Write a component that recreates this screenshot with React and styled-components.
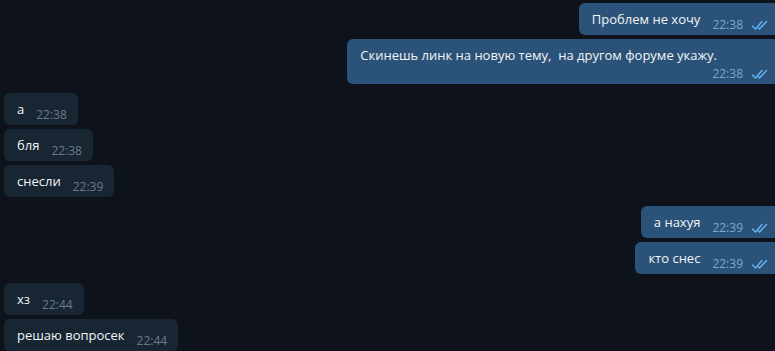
import React from "react";
import styled, { createGlobalStyle } from "styled-components";

const Global = createGlobalStyle`
  html, body { margin: 0; padding: 0; background: #0e131b; overflow: hidden; }
  body { font-family: "Open Sans", "Noto Sans", sans-serif; }
`;

const Chat = styled.div`
  display: flex;
  flex-direction: column;
  padding: 3px 0 0 4px;
  width: 775px;
  height: 351px;
  box-sizing: border-box;
  overflow: hidden;
`;

const Group = styled.div`
  display: flex;
  flex-direction: column;
  align-items: ${(p) => (p.$out ? "flex-end" : "flex-start")};
  gap: 4px;
  margin-top: ${(p) => p.$gap || 0}px;
  margin-right: ${(p) => (p.$out ? "-4px" : "0")};
`;

const Bubble = styled.div`
  display: flex;
  flex-direction: ${(p) => (p.$wrap ? "column" : "row")};
  align-items: flex-end;
  box-sizing: border-box;
  padding: 7px ${(p) => (p.$out ? "10px" : "11px")} 6px 13px;
  border-radius: 6px;
  background: ${(p) => (p.$out ? "#2b5278" : "#182533")};
  color: #f2f4f6;
`;

const Text = styled.div`
  font-size: 13px;
  line-height: 19px;
  white-space: pre;
  align-self: flex-start;
  padding-right: ${(p) => (p.$wrap ? "52px" : "0")};
`;

const Meta = styled.div`
  display: flex;
  align-items: center;
  gap: 8px;
  margin-left: ${(p) => (p.$wrap ? "0" : "12px")};
  margin-top: ${(p) => (p.$wrap ? "2px" : "0")};
  margin-bottom: -3px;
  font-size: 12px;
  line-height: 14px;
  color: ${(p) => (p.$out ? "#7ea7cf" : "#6b7a89")};
`;

const Checks = () => (
  <svg width="18" height="11" viewBox="0 0 18 11" fill="none">
    <path
      d="M1.5 6 L4.5 9 L11 1.5 M7.5 8 L8.5 9 L15.5 1.5"
      stroke="#64b1ef"
      strokeWidth="1.5"
      strokeLinecap="round"
      strokeLinejoin="round"
    />
  </svg>
);

const Message = ({ text, time, out, wrap }) => (
  <Bubble $out={out} $wrap={wrap}>
    <Text $wrap={wrap}>{text}</Text>
    <Meta $out={out} $wrap={wrap}>
      <span>{time}</span>
      {out && <Checks />}
    </Meta>
  </Bubble>
);

export default function App() {
  return (
    <>
      <Global />
      <Chat>
        <Group $out>
          <Message out text="Проблем не хочу" time="22:38" />
          <Message out wrap text="Скинешь линк на новую тему,  на другом форуме укажу." time="22:38" />
        </Group>
        <Group $gap={9}>
          <Message text="а" time="22:38" />
          <Message text="бля" time="22:38" />
          <Message text="снесли" time="22:39" />
        </Group>
        <Group $out $gap={9}>
          <Message out text="а нахуя" time="22:39" />
          <Message out text="кто снес" time="22:39" />
        </Group>
        <Group $gap={9}>
          <Message text="хз" time="22:44" />
          <Message text="решаю вопросек" time="22:44" />
        </Group>
      </Chat>
    </>
  );
}
